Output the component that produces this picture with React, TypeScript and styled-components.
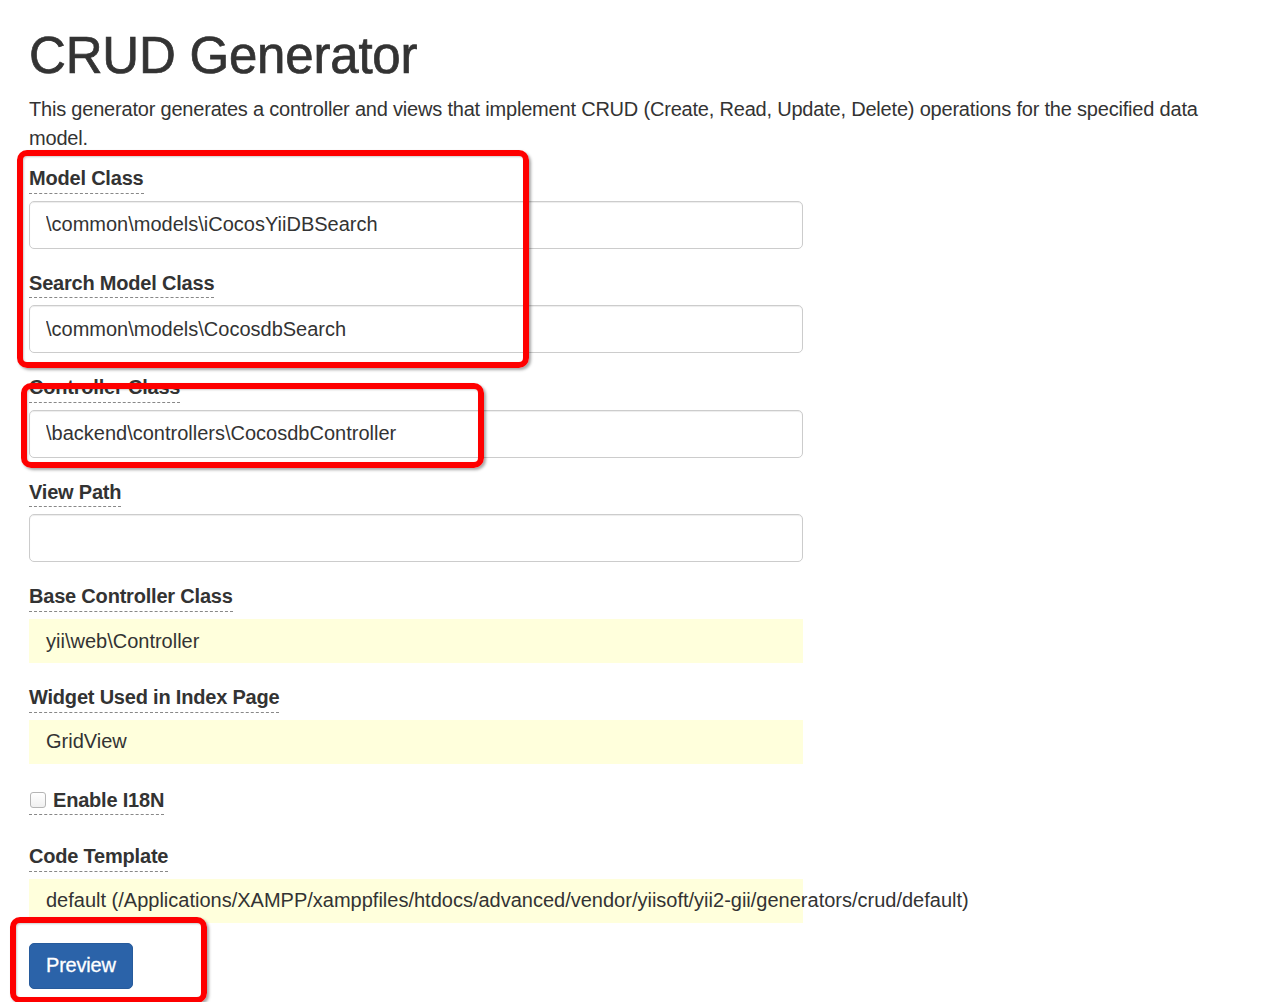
import React from "react";
import styled, { createGlobalStyle } from "styled-components";

const Global = createGlobalStyle`
  html, body { margin: 0; padding: 0; background: #fff; }
  body {
    font-family: "Liberation Sans", Arial, Helvetica, sans-serif;
    font-size: 20px;
    line-height: 1.42857;
    color: #333;
  }
  * { box-sizing: border-box; }
`;

const Page = styled.div`
  position: relative;
  width: 1262px;
  height: 1002px;
  overflow: hidden;
  padding: 0 28px 0 29px;
`;

const Title = styled.h1`
  margin: 28px 0 0;
  font-size: 51px;
  font-weight: 500;
  line-height: 1.1;
  color: #333;
  letter-spacing: -0.2px;
  -webkit-text-stroke: 0.7px #333;
`;

const Intro = styled.p`
  margin: 11px 0 12px;
  width: 1200px;
  letter-spacing: -0.2px;
`;

const Form = styled.form`
  width: 774px;
  display: flex;
  flex-direction: column;
`;

const Group = styled.div`
  display: flex;
  flex-direction: column;
  align-items: flex-start;
  margin-bottom: 20px;
`;

const Label = styled.label`
  display: inline-flex;
  align-items: center;
  gap: 7px;
  font-weight: bold;
  border-bottom: 1px dashed #888;
  margin-bottom: 7px;
  cursor: help;
  letter-spacing: -0.2px;
`;

const TextInput = styled.input`
  width: 100%;
  height: 48px;
  padding: 0 16px;
  border: 1px solid #ccc;
  border-radius: 5px;
  box-shadow: inset 0 1px 1px rgba(0, 0, 0, 0.075);
  font: inherit;
  color: #333;
  background: #fff;
  outline: none;
`;

const Sticky = styled.div`
  width: 100%;
  height: 44px;
  padding: 0 17px;
  display: flex;
  align-items: center;
  background: #ffffdc;
  white-space: nowrap;
  overflow: visible;
`;

const CheckGroup = styled.div`
  display: flex;
  align-items: flex-start;
  margin: 2px 0 27px;
`;

const Check = styled.input`
  appearance: none;
  margin: 0 0 0 1px;
  width: 16px;
  height: 16px;
  border: 1px solid #b5b5b5;
  border-radius: 3px;
  background: linear-gradient(#fff, #f0f0f0);
`;

const CheckLabel = styled(Label)`
  margin-bottom: 0;
`;

const Button = styled.button`
  align-self: flex-start;
  margin-top: 0;
  height: 46px;
  padding: 0 16px;
  font: inherit;
  color: #fff;
  background: #2b63a9;
  border: 1px solid #275b9c;
  border-radius: 5px;
  letter-spacing: -0.2px;
  -webkit-text-stroke: 0.3px #fff;
`;

const Highlight = styled.div<{ $x: number; $y: number; $w: number; $h: number }>`
  position: absolute;
  left: ${(p) => p.$x}px;
  top: ${(p) => p.$y}px;
  width: ${(p) => p.$w}px;
  height: ${(p) => p.$h}px;
  border: 6px solid #fe0000;
  border-radius: 10px;
  box-shadow: 2px 2px 3px rgba(0, 0, 0, 0.35), inset 1px 1px 2px rgba(0, 0, 0, 0.2);
  pointer-events: none;
`;

type Field = { label: string; value: string; sticky?: boolean };

const fields: Field[] = [
  { label: "Model Class", value: "\\common\\models\\iCocosYiiDBSearch" },
  { label: "Search Model Class", value: "\\common\\models\\CocosdbSearch" },
  { label: "Controller Class", value: "\\backend\\controllers\\CocosdbController" },
  { label: "View Path", value: "" },
  { label: "Base Controller Class", value: "yii\\web\\Controller", sticky: true },
  { label: "Widget Used in Index Page", value: "GridView", sticky: true },
];

export default function App() {
  return (
    <>
      <Global />
      <Page>
        <Title>CRUD Generator</Title>
        <Intro>
          This generator generates a controller and views that implement CRUD (Create, Read, Update,
          Delete) operations for the specified data model.
        </Intro>
        <Form onSubmit={(e) => e.preventDefault()}>
          {fields.map((f) => (
            <Group key={f.label}>
              <Label>{f.label}</Label>
              {f.sticky ? <Sticky>{f.value}</Sticky> : <TextInput readOnly value={f.value} />}
            </Group>
          ))}
          <CheckGroup>
            <CheckLabel>
              <Check type="checkbox" />
              Enable I18N
            </CheckLabel>
          </CheckGroup>
          <Group>
            <Label>Code Template</Label>
            <Sticky>
              default (/Applications/XAMPP/xamppfiles/htdocs/advanced/vendor/yiisoft/yii2-gii/generators/crud/default)
            </Sticky>
          </Group>
          <Button type="submit">Preview</Button>
        </Form>
        <Highlight $x={17} $y={150} $w={512} $h={218} />
        <Highlight $x={21} $y={383} $w={463} $h={85} />
        <Highlight $x={10} $y={917} $w={197} $h={86} />
      </Page>
    </>
  );
}
